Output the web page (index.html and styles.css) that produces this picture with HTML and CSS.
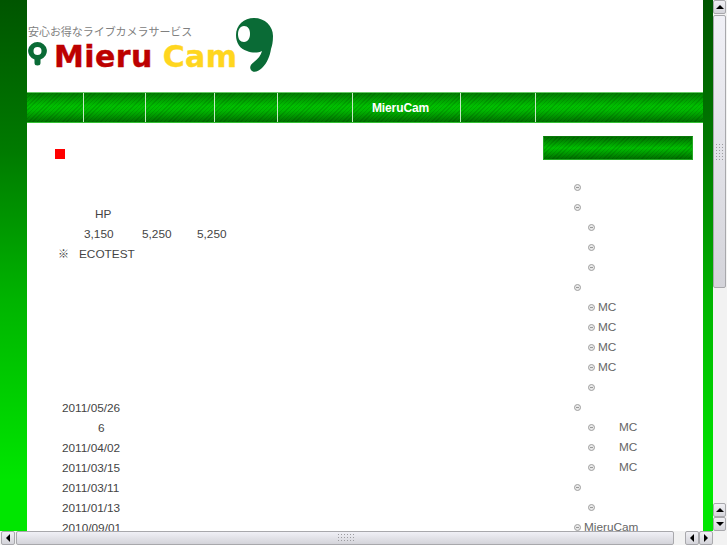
FILE: index.html
```html
<!DOCTYPE html>
<html lang="ja">

<head>
  <meta charset="UTF-8" />
  <meta name="viewport" content="width=device-width, initial-scale=1.0" />
  <title>MieruCam</title>
  <link rel="stylesheet" href="styles.css">
</head>

<body>
  <div class="window">
    <div class="view">
      <div class="page">
        <div class="header">
          <div class="logo">
            <p class="tagline">安心お得なライブカメラサービス</p>
            <div class="logo-name">
              <svg class="pin" width="19" height="24" viewBox="0 0 19 24">
                <path fill="#0a6b36" fill-rule="evenodd" d="M9.500 0a9.500 9 0 0 1 3 17.500V21a3 2.500 0 0 1-6 0v-3.500A9.500 9 0 0 1 9.500 0zM9.500 5a4 4 0 1 0 0 8 4 4 0 0 0 0-8z" />
              </svg>
              <span class="red">Mieru</span>
              <span class="yellow">Cam</span>
            </div>
          </div>
          <svg class="nine" width="37" height="55" viewBox="0 0 37 55">
            <path fill="#0a6b36" fill-rule="evenodd" d="M18 0C29 0 37 8 37 18C37 24 36 28 35 31C34 38 31 45 26 50C22 54 17 55 15 52C13 49 15 46 18 44C22 41 25 37 26 33C22 35 16 35 11 33C4 31 0 25 0 17C0 7 8 0 18 0zM8 8C4 8 2 12 2 16C2 21 4 24 8 24C12 24 14 20 14 16C14 11 12 8 8 8z" />
          </svg>
        </div>

        <ul class="nav">
          <li class="w56"></li>
          <li class="w62"></li>
          <li class="w69"></li>
          <li class="w63"></li>
          <li class="w75"></li>
          <li class="w108">MieruCam</li>
          <li class="w75"></li>
          <li class="last"></li>
        </ul>

        <div class="content">
          <div class="main">
            <h2 class="title"></h2>
            <div class="price-name">HP</div>
            <div class="prices">
              <span>3,150</span>
              <span>5,250</span>
              <span>5,250</span>
            </div>
            <div class="note"><span class="mark">※</span>ECOTEST</div>
            <ul class="news">
              <li>2011/05/26</li>
              <li class="count">6</li>
              <li>2011/04/02</li>
              <li>2011/03/15</li>
              <li>2011/03/11</li>
              <li>2011/01/13</li>
              <li>2010/09/01</li>
            </ul>
          </div>

          <div class="side">
            <div class="side-head"></div>
            <ul class="menu">
              <li></li>
              <li></li>
              <li class="sub"></li>
              <li class="sub"></li>
              <li class="sub"></li>
              <li></li>
              <li class="sub">MC</li>
              <li class="sub">MC</li>
              <li class="sub">MC</li>
              <li class="sub">MC</li>
              <li class="sub"></li>
              <li></li>
              <li class="sub wide">MC</li>
              <li class="sub wide">MC</li>
              <li class="sub wide">MC</li>
              <li></li>
              <li class="sub"></li>
              <li>MieruCam</li>
            </ul>
          </div>
        </div>
      </div>
      <div class="edge"></div>
    </div>

    <div class="vbar">
      <div class="btn"><span class="up"></span></div>
      <div class="thumb-v"><div class="grip"></div></div>
      <div class="track"></div>
      <div class="btn"><span class="up"></span></div>
      <div class="btn"><span class="down"></span></div>
    </div>

    <div class="hbar">
      <div class="btn"><span class="left"></span></div>
      <div class="thumb-h"><div class="grip"></div></div>
      <div class="track"></div>
      <div class="btn"><span class="left"></span></div>
      <div class="btn"><span class="right"></span></div>
    </div>
    <div class="corner"></div>
  </div>
</body>

</html>
```

FILE: styles.css
```css
body {
  margin: 0;
  font-family: "Liberation Sans", Arial, sans-serif;
  font-size: 11.8px;
  color: #444;
  background-color: #fff;
}

ul {
  margin: 0;
  padding: 0;
  list-style: none;
}

.window {
  display: grid;
  grid-template-columns: 713px 14px;
  grid-template-rows: 531px 14px;
  width: 727px;
  height: 545px;
  overflow: hidden;
}

.view {
  display: flex;
  overflow: hidden;
  padding-left: 27px;
  background: linear-gradient(#005500, #007a00 150px, #00b400 300px, #00e600 480px) left top / 27px 100% no-repeat;
}

.page {
  width: 676px;
  flex-shrink: 0;
  background-color: #fff;
}

.edge {
  width: 10px;
  background: linear-gradient(#005500, #007a00 150px, #00b400 300px, #00e600 480px);
}

/* header */
.header {
  display: flex;
  height: 92px;
  box-sizing: border-box;
  padding: 18px 0 0 1px;
}

.logo {
  padding-top: 6px;
}

.tagline {
  margin: 0;
  font-family: "Noto Sans CJK JP", sans-serif;
  font-size: 11px;
  line-height: 15px;
  letter-spacing: -0.05px;
  color: #808080;
  white-space: nowrap;
}

.logo-name {
  display: flex;
  height: 29px;
  margin-top: 3px;
  font-family: "DejaVu Sans", sans-serif;
  font-size: 30px;
  font-weight: bold;
  line-height: 29px;
  letter-spacing: 0.4px;
  -webkit-text-stroke: 0.4px;
}

.pin {
  margin-right: 7px;
}

.red {
  color: #bd0000;
  margin-right: 10px;
}

.yellow {
  color: #ffd61f;
}

.nine {
  margin-left: -1px;
}

/* nav */
.nav,
.side-head {
  background-color: #00a000;
  background-image:
    repeating-linear-gradient(135deg, rgba(0, 0, 0, 0.12) 0, rgba(0, 0, 0, 0.12) 1px, transparent 1px, transparent 3px),
    linear-gradient(#007d00, #00c000 45%, #00b800 60%, #007000);
}

.nav {
  display: flex;
  height: 29px;
  border-top: 1px solid #66c966;
  border-bottom: 1px solid #33c033;
}

.nav li {
  box-sizing: border-box;
  border-right: 1px solid #c4e8c4;
  color: #fff;
  font-size: 12px;
  font-weight: bold;
  line-height: 31px;
  text-align: center;
}

.nav .w108 {
  padding-right: 12px;
  letter-spacing: -0.1px;
}

.nav .last {
  flex: 1;
  border-right: none;
}

.w56 { width: 57px; }
.w62 { width: 62px; }
.w69 { width: 69px; }
.w63 { width: 63px; }
.w75 { width: 75px; }
.w108 { width: 108px; }

/* content */
.content {
  display: flex;
  justify-content: space-between;
}

.main {
  padding: 26px 0 0 28px;
  line-height: 20px;
}

.title {
  width: 10px;
  height: 10px;
  margin: 0 0 45px;
  background-color: #f00;
}

.price-name {
  padding-left: 40px;
}

.prices {
  display: flex;
  padding-left: 29px;
}

.prices span {
  width: 58px;
}

.prices span:last-child {
  margin-left: -3px;
}

.note {
  height: 20px;
  padding-left: 3px;
}

.mark {
  display: inline-block;
  width: 21px;
  font-family: "Noto Sans CJK JP", sans-serif;
  font-size: 11px;
  line-height: 1;
}

.news {
  margin-top: 134px;
  padding-left: 7px;
}

.news li {
  height: 20px;
}

.news .count {
  padding-left: 36px;
}

.side {
  width: 150px;
  margin-right: 10px;
  padding-top: 13px;
}

.side-head {
  height: 24px;
  box-sizing: border-box;
  border: 1px solid #22aa22;
  border-top-color: #0a7a0a;
  background-image:
    repeating-linear-gradient(135deg, rgba(0, 0, 0, 0.12) 0, rgba(0, 0, 0, 0.12) 1px, transparent 1px, transparent 3px),
    linear-gradient(#006e00, #00c000 50%, #006e00);
}

.menu {
  margin-top: 17px;
  padding-left: 31px;
  color: #666;
  line-height: 20px;
}

.menu li {
  position: relative;
  height: 20px;
  padding-left: 10px;
  white-space: nowrap;
}

/* the little round arrow bullet */
.menu li::before {
  content: "";
  position: absolute;
  left: 0;
  top: 7px;
  width: 5px;
  height: 5px;
  border: 1px solid #a0a0a0;
  border-radius: 50%;
  background: linear-gradient(#999, #999) center / 3px 1px no-repeat #e8e8e8;
}

.menu .sub {
  margin-left: 14px;
}

.menu .wide {
  padding-left: 31px;
}

/* scrollbars */
.vbar {
  display: flex;
  flex-direction: column;
  padding-right: 1px;
  background: #f2f2f2;
}

.hbar {
  display: flex;
  padding-left: 1px;
  background: #f2f2f2;
}

.corner {
  background: #f2f2f2;
}

.btn {
  display: flex;
  align-items: center;
  justify-content: center;
  flex-shrink: 0;
  width: 14px;
  height: 14px;
  box-sizing: border-box;
  border: 1px solid #a8a8ac;
  border-radius: 2px;
  background: linear-gradient(#f0f0f4, #d4d4da);
}

.vbar .btn {
  width: 13px;
}

.track {
  flex: 1;
  background-color: #f2f2f2;
  background-image: radial-gradient(#dcdcdc 0.5px, transparent 0.5px);
  background-size: 2px 2px;
}

.thumb-v,
.thumb-h {
  display: flex;
  align-items: center;
  justify-content: center;
  box-sizing: border-box;
  border: 1px solid #a8a8ac;
  border-radius: 2px;
}

.thumb-v {
  height: 273px;
  margin-top: 1px;
  background: linear-gradient(#f0f0f6, #d4d4da);
}

.thumb-h {
  width: 658px;
  margin-left: 1px;
  background: linear-gradient(#f0f0f6, #d4d4da);
}

.thumb-v .grip {
  width: 10px;
  height: 17px;
}

.thumb-h .grip {
  width: 17px;
  height: 10px;
}

.grip {
  background-image: radial-gradient(#9c9ca0 0.7px, transparent 0.7px);
  background-size: 3px 3px;
}

.up,
.down,
.left,
.right {
  width: 0;
  height: 0;
  border: 4px solid transparent;
}

.up {
  border-top: none;
  border-bottom-color: #000;
}

.down {
  border-bottom: none;
  border-top-color: #000;
}

.left {
  border-left: none;
  border-right-color: #000;
}

.right {
  border-right: none;
  border-left-color: #000;
}
```
